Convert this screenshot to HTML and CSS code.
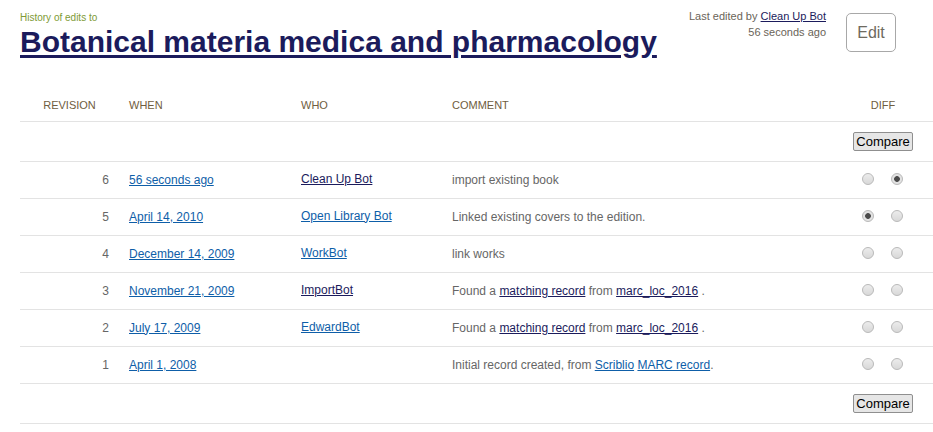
FILE: index.html
```html
<!DOCTYPE html>
<html>
<head>
<meta charset="utf-8">
<title>History</title>
<link rel="stylesheet" href="styles.css">
</head>
<body>
<div class="page">
  <header class="head">
    <div class="head-left">
      <div class="kicker">History of edits to</div>
      <h1 class="title"><a href="#" class="visited">Botanical materia medica and pharmacology</a></h1>
    </div>
    <div class="head-right">
      <div class="meta">
        <div>Last edited by <a href="#" class="visited">Clean Up Bot</a></div>
        <div>56 seconds ago</div>
      </div>
      <button class="edit-btn">Edit</button>
    </div>
  </header>

  <table class="history">
    <colgroup>
      <col class="c-rev"><col class="c-when"><col class="c-who"><col class="c-comment"><col class="c-diff">
    </colgroup>
    <thead>
      <tr class="hrow">
        <th class="rev-h">Revision</th>
        <th>When</th>
        <th>Who</th>
        <th>Comment</th>
        <th class="diff-h">Diff</th>
      </tr>
    </thead>
    <tbody>
      <tr class="crow">
        <td colspan="4"></td>
        <td class="diff"><button class="cmp">Compare</button></td>
      </tr>
      <tr class="row">
        <td class="rev">6</td>
        <td><a href="#">56 seconds ago</a></td>
        <td class="who"><a href="#" class="visited">Clean Up Bot</a></td>
        <td>import existing book</td>
        <td class="diff"><span class="radios"><span class="radio"></span><span class="radio on"></span></span></td>
      </tr>
      <tr class="row">
        <td class="rev">5</td>
        <td><a href="#">April 14, 2010</a></td>
        <td class="who"><a href="#">Open Library Bot</a></td>
        <td>Linked existing covers to the edition.</td>
        <td class="diff"><span class="radios"><span class="radio on"></span><span class="radio"></span></span></td>
      </tr>
      <tr class="row">
        <td class="rev">4</td>
        <td><a href="#">December 14, 2009</a></td>
        <td class="who"><a href="#">WorkBot</a></td>
        <td>link works</td>
        <td class="diff"><span class="radios"><span class="radio"></span><span class="radio"></span></span></td>
      </tr>
      <tr class="row">
        <td class="rev">3</td>
        <td><a href="#">November 21, 2009</a></td>
        <td class="who"><a href="#" class="visited">ImportBot</a></td>
        <td>Found a <a href="#" class="visited">matching record</a> from <a href="#" class="visited">marc_loc_2016</a> .</td>
        <td class="diff"><span class="radios"><span class="radio"></span><span class="radio"></span></span></td>
      </tr>
      <tr class="row">
        <td class="rev">2</td>
        <td><a href="#">July 17, 2009</a></td>
        <td class="who"><a href="#">EdwardBot</a></td>
        <td>Found a <a href="#" class="visited">matching record</a> from <a href="#" class="visited">marc_loc_2016</a> .</td>
        <td class="diff"><span class="radios"><span class="radio"></span><span class="radio"></span></span></td>
      </tr>
      <tr class="row">
        <td class="rev">1</td>
        <td><a href="#">April 1, 2008</a></td>
        <td class="who"></td>
        <td>Initial record created, from <a href="#">Scriblio</a> <a href="#">MARC record</a>.</td>
        <td class="diff"><span class="radios"><span class="radio"></span><span class="radio"></span></span></td>
      </tr>
      <tr class="crow">
        <td colspan="4"></td>
        <td class="diff"><button class="cmp">Compare</button></td>
      </tr>
    </tbody>
  </table>
</div>
</body>
</html>
```

FILE: styles.css
```css
html, body {
  margin: 0;
  padding: 0;
  background: #fff;
}

body {
  font-family: "Liberation Sans", Arial, sans-serif;
  color: #666;
}

.page {
  padding-left: 20px;
}

a {
  color: #0e5ea8;
  text-decoration: underline;
}

a.visited {
  color: #1b1b5c;
}

.head {
  display: flex;
  justify-content: space-between;
  align-items: flex-start;
  padding-right: 37px;
}

.head-left {
  padding-top: 11.5px;
}

.kicker {
  font-size: 10px;
  line-height: 12px;
  color: #7e9a35;
}

.title {
  margin: 0;
  font-size: 30px;
  line-height: 36px;
  font-weight: bold;
}

.title a {
  text-decoration-thickness: 3px;
  text-underline-offset: 3px;
}

.head-right {
  display: flex;
  align-items: flex-start;
  gap: 20px;
}

.meta {
  padding-top: 8px;
  font-size: 11px;
  line-height: 16px;
  text-align: right;
  color: #6a6458;
}

.edit-btn {
  margin-top: 13px;
  width: 50px;
  height: 39px;
  border: 1px solid #a8a8a8;
  border-radius: 5px;
  background: #fff;
  font-family: "Liberation Sans", Arial, sans-serif;
  font-size: 16px;
  color: #6e6a60;
  padding: 0;
}

.history {
  margin-top: 30px;
  border-collapse: collapse;
  width: 913px;
  table-layout: fixed;
  font-size: 12px;
}

.c-rev { width: 99px; }
.c-when { width: 172px; }
.c-who { width: 151px; }
.c-comment { width: 391px; }
.c-diff { width: 100px; }

.history tr {
  border-bottom: 1px solid #e3e3e3;
}

.history th {
  height: 31px;
  padding: 0 10px;
  font-size: 11px;
  font-weight: normal;
  text-transform: uppercase;
  text-align: left;
  color: #6f5d40;
  vertical-align: middle;
}

.history th.rev-h {
  text-align: center;
}

.history th.diff-h {
  text-align: center;
}

.history td {
  padding: 0 10px;
  vertical-align: middle;
  color: #666;
}

.row td {
  height: 36px;
}

.crow td {
  height: 39px;
}

.history td.rev {
  text-align: right;
}

.history td.who a {
  position: relative;
  top: -1px;
}

.history td.diff {
  text-align: center;
  padding: 0 2px 0 0;
}

.radios {
  display: flex;
  justify-content: center;
  gap: 17px;
  position: relative;
  top: -1px;
}

.radio {
  display: block;
  width: 12px;
  height: 12px;
  box-sizing: border-box;
  border: 1px solid #bababa;
  border-radius: 50%;
  background: linear-gradient(#ececec, #d8d8d8);
}

.radio.on {
  background: radial-gradient(circle, #4a4a4a 0 2.5px, #e2e2e2 3.2px);
}

.cmp {
  font-family: "Liberation Sans", Arial, sans-serif;
  font-size: 13px;
  color: #000;
  background: #e6e6e6;
  border: 1px solid #8f8f8f;
  border-radius: 2px;
  padding: 0 2px;
  height: 19px;
  line-height: 17px;
  position: relative;
  left: 1px;
}
```
